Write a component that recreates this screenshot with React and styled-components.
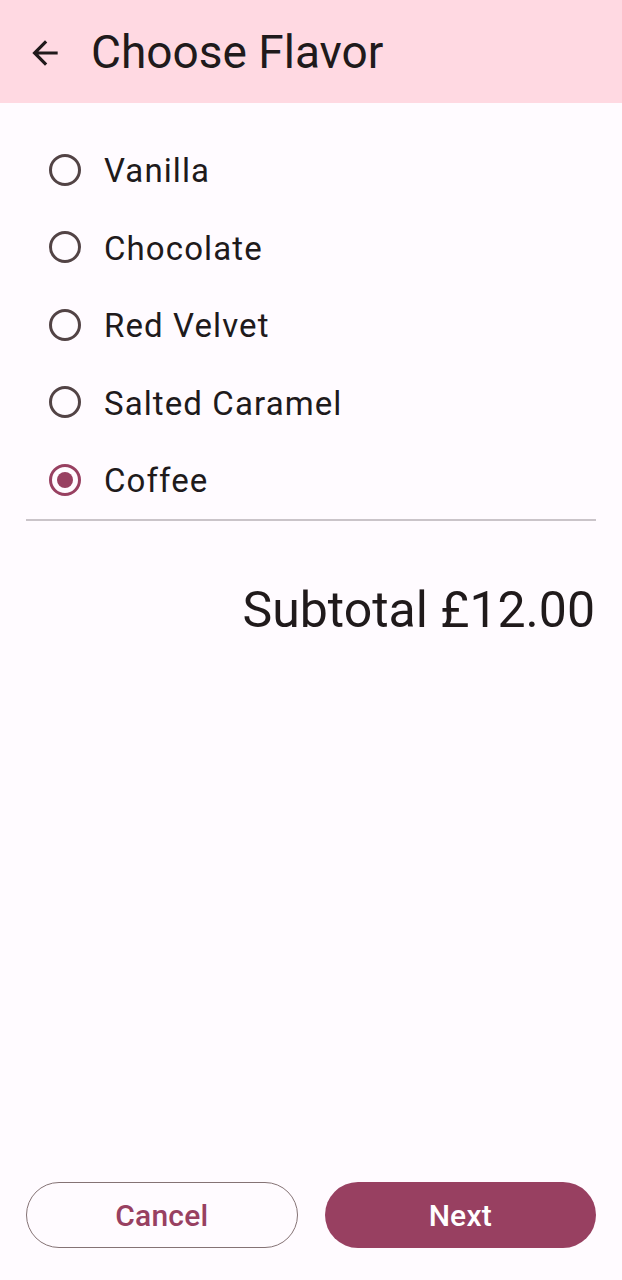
import React, { useState } from 'react';
import styled, { createGlobalStyle } from 'styled-components';

const GlobalStyle = createGlobalStyle`
  body {
    margin: 0;
    background: #fffbff;
    font-family: Roboto, "Liberation Sans", sans-serif;
    color: #201a1b;
  }
`;

const Page = styled.div`
  min-height: 100vh;
  display: flex;
  flex-direction: column;
  box-sizing: border-box;
`;

const TopBar = styled.header`
  height: 103px;
  background: #ffd9e2;
  display: flex;
  align-items: center;
  padding-left: 26px;
  gap: 27px;
`;

const BackButton = styled.button`
  width: 38px;
  height: 38px;
  padding: 0;
  border: none;
  background: none;
  color: #201a1b;
  display: flex;
  align-items: center;
  justify-content: center;
  margin-top: 2px;
`;

const Title = styled.h1`
  margin: 0;
  font-size: 46px;
  font-weight: 400;
  letter-spacing: 0;
`;

const List = styled.div`
  padding: 28px 26px 0;
  display: flex;
  flex-direction: column;
`;

const Row = styled.label`
  height: 77.5px;
  display: flex;
  align-items: center;
  gap: 23px;
  padding-left: 23px;
  cursor: pointer;
`;

const Radio = styled.span`
  width: 32px;
  height: 32px;
  box-sizing: border-box;
  border-radius: 50%;
  border: 3px solid ${p => (p.$checked ? '#984061' : '#524345')};
  display: flex;
  align-items: center;
  justify-content: center;
  flex-shrink: 0;

  &::after {
    content: '';
    width: 16px;
    height: 16px;
    border-radius: 50%;
    background: #984061;
    display: ${p => (p.$checked ? 'block' : 'none')};
  }
`;

const Label = styled.span`
  font-size: 33px;
  letter-spacing: 1.1px;
  padding-top: 2px;
`;

const Divider = styled.hr`
  margin: 0;
  border: none;
  height: 2px;
  background: #cac4c9;
`;

const Subtotal = styled.div`
  padding: 57px 27px 0;
  text-align: right;
  font-size: 50px;
  line-height: 64px;
`;

const Actions = styled.div`
  margin-top: auto;
  padding: 0 26px 32px;
  display: grid;
  grid-template-columns: 1fr 1fr;
  gap: 27px;
`;

const Button = styled.button`
  height: 66px;
  border-radius: 33px;
  font-family: Roboto, "Liberation Sans", sans-serif;
  font-size: 30px;
  font-weight: 500;
  letter-spacing: 0.2px;
  padding-top: 2px;
  border: ${p => (p.$filled ? 'none' : '1.5px solid #857375')};
  background: ${p => (p.$filled ? '#984061' : 'transparent')};
  color: ${p => (p.$filled ? '#ffffff' : '#984061')};
`;

const flavors = ['Vanilla', 'Chocolate', 'Red Velvet', 'Salted Caramel', 'Coffee'];

const App = () => {
  const [selected, setSelected] = useState('Coffee');
  return (
    <Page>
      <GlobalStyle />
      <TopBar>
        <BackButton aria-label="Back">
          <svg width="38" height="38" viewBox="0 0 24 24" fill="currentColor">
            <path d="M20 11H7.83l5.59-5.59L12 4l-8 8 8 8 1.41-1.41L7.83 13H20v-2z" />
          </svg>
        </BackButton>
        <Title>Choose Flavor</Title>
      </TopBar>
      <List>
        {flavors.map(f => (
          <Row key={f} onClick={() => setSelected(f)}>
            <Radio $checked={selected === f} />
            <Label>{f}</Label>
          </Row>
        ))}
        <Divider />
      </List>
      <Subtotal>Subtotal £12.00</Subtotal>
      <Actions>
        <Button>Cancel</Button>
        <Button $filled>Next</Button>
      </Actions>
    </Page>
  );
};

export default App;
